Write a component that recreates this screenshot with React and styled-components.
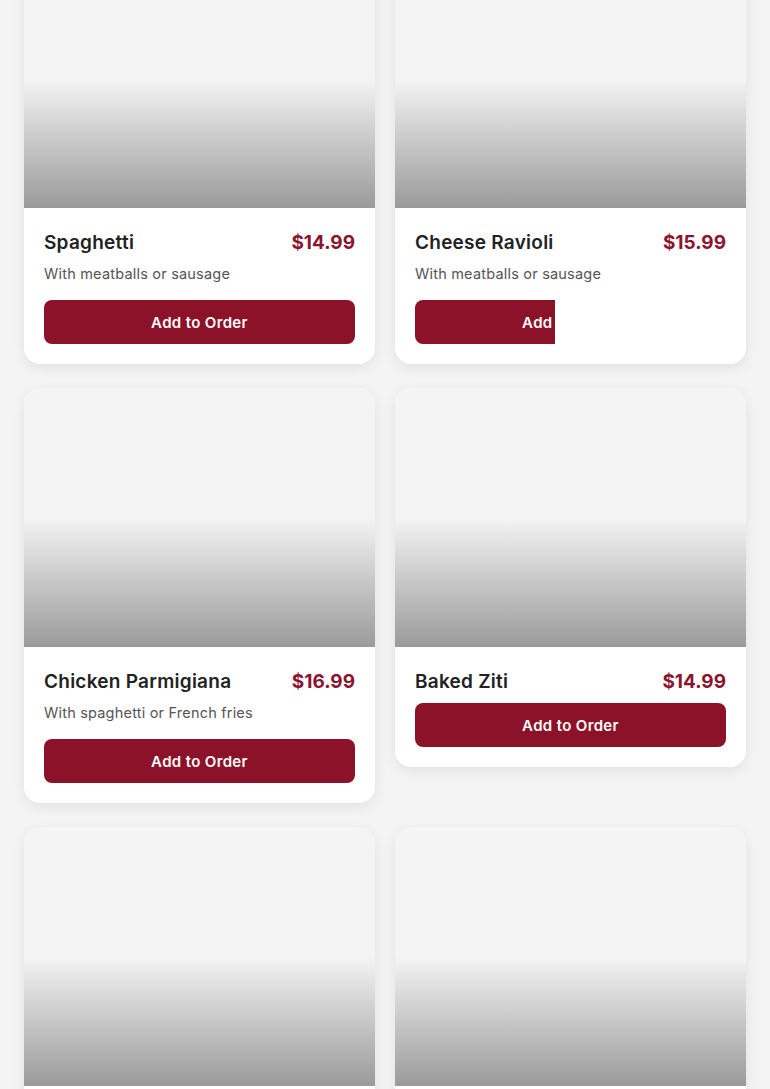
import React from 'react';
import styled, { createGlobalStyle } from 'styled-components';

const GlobalStyle = createGlobalStyle`
    html, body {
        margin: 0;
        padding: 0;
        background: #f4f4f4;
        font-family: "Inter", "Liberation Sans", sans-serif;
        overflow: hidden;
    }
`

const MenuGrid = styled.div`
    display: grid;
    grid-template-columns: repeat(2, 1fr);
    column-gap: 20px;
    row-gap: 24px;
    align-items: start;
    padding: 0 24px;
    margin-top: -51px;
`

const Card = styled.div`
    background: #fff;
    border-radius: 16px;
    overflow: hidden;
    box-shadow: 0 4px 14px rgba(0, 0, 0, 0.08);
`

const Photo = styled.div`
    height: 259px;
    background: linear-gradient(to bottom, rgba(0, 0, 0, 0) 50%, rgba(0, 0, 0, 0.37) 100%), #f4f4f4;
`

const Body = styled.div`
    padding: 20px;
`

const TitleRow = styled.div`
    display: flex;
    justify-content: space-between;
    align-items: center;
    height: 28px;
    margin-bottom: 8px;
`

const Name = styled.h3`
    margin: 0;
    font-size: 19px;
    font-weight: 600;
    letter-spacing: 0.25px;
    color: #222;
`

const Price = styled.span`
    font-size: 19px;
    font-weight: 700;
    color: #8c1430;
`

const Description = styled.p`
    margin: 0 0 16px;
    font-size: 14.5px;
    line-height: 20px;
    letter-spacing: 0.2px;
    color: #555;
`

const OrderButton = styled.button`
    display: block;
    width: 100%;
    height: 44px;
    border: none;
    border-radius: 8px;
    background: #8c1229;
    color: #fff;
    font-family: inherit;
    font-size: 15px;
    font-weight: 600;
    letter-spacing: 0.35px;
    cursor: pointer;
    clip-path: ${props => props.clip ? `inset(0 ${props.clip}px 0 0)` : 'none'};
`

const items = [
    { name: 'Spaghetti', price: '$14.99', description: 'With meatballs or sausage' },
    { name: 'Cheese Ravioli', price: '$15.99', description: 'With meatballs or sausage', clip: 171 },
    { name: 'Chicken Parmigiana', price: '$16.99', description: 'With spaghetti or French fries' },
    { name: 'Baked Ziti', price: '$14.99' },
    { name: 'Lasagna', price: '$15.99', description: 'Layered with ricotta' },
    { name: 'Fettuccine Alfredo', price: '$14.99', description: 'Creamy parmesan sauce' },
]

const MenuItem = props => {
    return(
        <Card>
            <Photo />
            <Body>
                <TitleRow>
                    <Name>{ props.name }</Name>
                    <Price>{ props.price }</Price>
                </TitleRow>
                { props.description && <Description>{ props.description }</Description> }
                <OrderButton clip={ props.clip }>Add to Order</OrderButton>
            </Body>
        </Card>
    );
}

const App = () => {
    return(
        <>
            <GlobalStyle />
            <MenuGrid>
                { items.map(item => <MenuItem key={ item.name } { ...item } />) }
            </MenuGrid>
        </>
    );
}

export default App;
